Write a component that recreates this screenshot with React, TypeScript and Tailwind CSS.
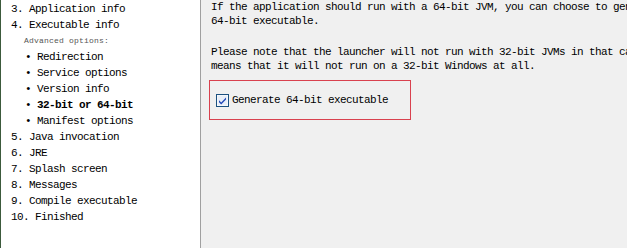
import React from 'react'

// Wizard step list on the left, "32-bit or 64-bit" page on the right
const steps = [
  { label: '3. Application info' },
  { label: '4. Executable info' },
]

const advanced = ['Redirection', 'Service options', 'Version info', '32-bit or 64-bit', 'Manifest options']

const laterSteps = ['5. Java invocation', '6. JRE', '7. Splash screen', '8. Messages', '9. Compile executable', '10. Finished']

const mono = "font-['Liberation_Mono',monospace] text-[11px] tracking-[-0.6px] text-black"

export default function App() {
  return (
    <div className="flex w-[627px] h-[248px] overflow-hidden bg-[#f0f0f0]">
      {/* Step list */}
      <div className="w-[201px] h-full bg-white border-l border-l-[#3c5a3c] border-r border-r-[#a0a0a0] pl-[10px] pt-[1px] shrink-0">
        <div className={mono}>
          {steps.map((s) => (
            <div key={s.label} className="h-[16px] leading-[16px] whitespace-pre">{s.label}</div>
          ))}
          <div className="h-[16px] leading-[16px] pl-[13px] font-['Liberation_Mono',monospace] text-[8px] tracking-[0.2px] text-[#555]">
            Advanced options:
          </div>
          {advanced.map((a) => (
            <div key={a} className="h-[16px] leading-[16px] pl-[14px] flex whitespace-pre">
              <span className="w-[12px]">•</span>
              <span className={a === '32-bit or 64-bit' ? 'font-bold' : ''}>{a}</span>
            </div>
          ))}
          {laterSteps.map((s) => (
            <div key={s} className="h-[16px] leading-[16px] whitespace-pre">{s}</div>
          ))}
        </div>
      </div>

      {/* Page content */}
      <div className={`flex-1 min-w-0 overflow-hidden pl-[10px] whitespace-nowrap ${mono}`}>
        <div className="leading-[14px]">
          <div>If the application should run with a 64-bit JVM, you can choose to gen</div>
          <div>64-bit executable.</div>
        </div>
        <div className="leading-[14px] mt-[17px]">
          <div>Please note that the launcher will not run with 32-bit JVMs in that ca</div>
          <div>means that it will not run on a 32-bit Windows at all.</div>
        </div>
        <div className="mt-[7px] ml-[-2px] w-[202px] h-[40px] border border-[#d9414e] flex items-center pl-[6px]">
          <svg width="13" height="13" viewBox="0 0 13 13" className="shrink-0">
            <rect x="0.5" y="0.5" width="12" height="12" fill="#fff" stroke="#1c5180" />
            <rect x="1.5" y="1.5" width="10" height="10" fill="#e8eef8" />
            <path d="M3 6.2 L5.2 8.6 L10 3.4 L10 5.4 L5.2 10.6 L3 8.2 Z" fill="#2147b8" />
          </svg>
          <span className="ml-[3px] leading-[14px]">Generate 64-bit executable</span>
        </div>
      </div>
    </div>
  )
}
